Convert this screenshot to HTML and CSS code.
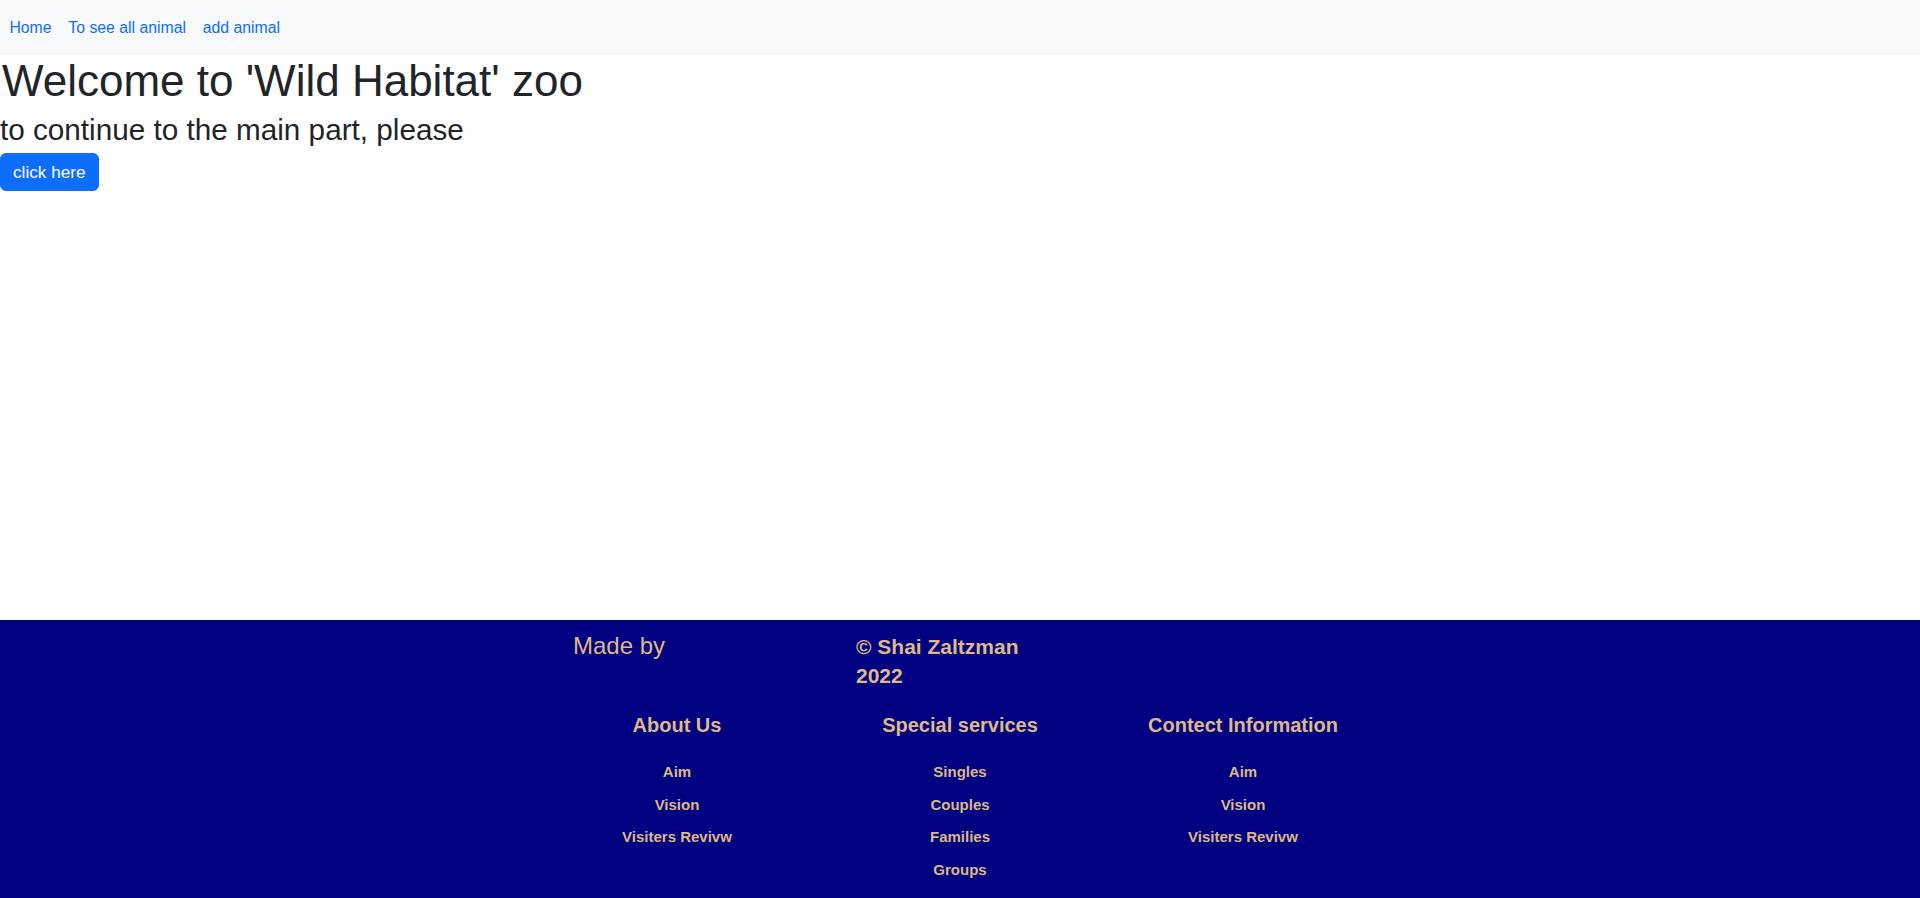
FILE: index.html
```html
<!DOCTYPE html>
<html lang="en">
<head>
<meta charset="utf-8">
<title>Wild Habitat zoo</title>
<link rel="stylesheet" href="styles.css">
</head>
<body>
<div class="page">
  <nav class="navbar">
    <ul class="nav-list">
      <li><a class="nav-link" href="#">Home</a></li>
      <li><a class="nav-link" href="#">To see all animal</a></li>
      <li><a class="nav-link" href="#">add animal</a></li>
    </ul>
  </nav>
  <main class="main">
    <h1 class="title">Welcome to 'Wild Habitat' zoo</h1>
    <h2 class="subtitle">to continue to the main part, please</h2>
    <a class="btn" href="#">click here</a>
  </main>
  <footer class="footer">
    <div class="footer-grid footer-top">
      <div class="made">Made by</div>
      <div class="copy">© Shai Zaltzman 2022</div>
    </div>
    <div class="footer-grid">
      <div class="col">
        <h3 class="col-title">About Us</h3>
        <ul class="col-links">
          <li><a href="#">Aim</a></li>
          <li><a href="#">Vision</a></li>
          <li><a href="#">Visiters Revivw</a></li>
        </ul>
      </div>
      <div class="col">
        <h3 class="col-title">Special services</h3>
        <ul class="col-links">
          <li><a href="#">Singles</a></li>
          <li><a href="#">Couples</a></li>
          <li><a href="#">Families</a></li>
          <li><a href="#">Groups</a></li>
        </ul>
      </div>
      <div class="col">
        <h3 class="col-title">Contect Information</h3>
        <ul class="col-links">
          <li><a href="#">Aim</a></li>
          <li><a href="#">Vision</a></li>
          <li><a href="#">Visiters Revivw</a></li>
        </ul>
      </div>
    </div>
  </footer>
</div>
</body>
</html>
```

FILE: styles.css
```css
* { box-sizing: border-box; }

html, body {
  margin: 0;
  padding: 0;
}

body {
  font-family: "Liberation Sans", Arial, sans-serif;
  color: #212529;
  background: #fff;
}

.page {
  min-height: 100vh;
  display: flex;
  flex-direction: column;
}

.navbar {
  background: #f8f9fa;
  padding: 8px 0 7px 1px;
}

.nav-list {
  list-style: none;
  margin: 0;
  padding: 0;
  display: flex;
}

.nav-link {
  display: block;
  padding: 8px 8.4px;
  font-size: 15.8px;
  line-height: 24px;
  color: #0d6efd;
  text-decoration: none;
}

.main {
  flex: 1;
}

.title {
  margin: 0 0 8px;
  padding: 2px 0 0 2px;
  font-size: 44px;
  line-height: 48px;
  font-weight: 400;
}

.subtitle {
  margin: 0 0 6px;
  font-size: 29.7px;
  line-height: 33.6px;
  font-weight: 400;
}

.btn {
  display: inline-block;
  padding: 6px 12px;
  border: 1px solid #0d6efd;
  border-radius: 6px;
  background: #0d6efd;
  color: #fff;
  font-size: 17.2px;
  line-height: 24px;
  text-decoration: none;
}

.footer {
  background: #000080;
  color: #deb887;
  padding: 8px 0 12px;
}

.footer-grid {
  width: 849px;
  margin: 0 auto;
  display: grid;
  grid-template-columns: repeat(3, 283px);
}

.footer-top {
  align-items: baseline;
  margin-bottom: 23px;
}

.made {
  padding-left: 37.5px;
  font-size: 24px;
  line-height: 36px;
}

.copy {
  margin-left: 37.5px;
  width: 180px;
  font-size: 21px;
  line-height: 29px;
  font-weight: 700;
}

.col {
  text-align: center;
}

.col-title {
  margin: 0 0 19.6px;
  padding-top: 0;
  font-size: 20px;
  line-height: 24px;
  font-weight: 700;
}

.col-links {
  list-style: none;
  margin: 0;
  padding: 0;
}

.col-links li {
  line-height: 32.4px;
}

.col-links a {
  color: #deb887;
  text-decoration: none;
  font-weight: 700;
  font-size: 15px;
  line-height: 32.4px;
}
```
